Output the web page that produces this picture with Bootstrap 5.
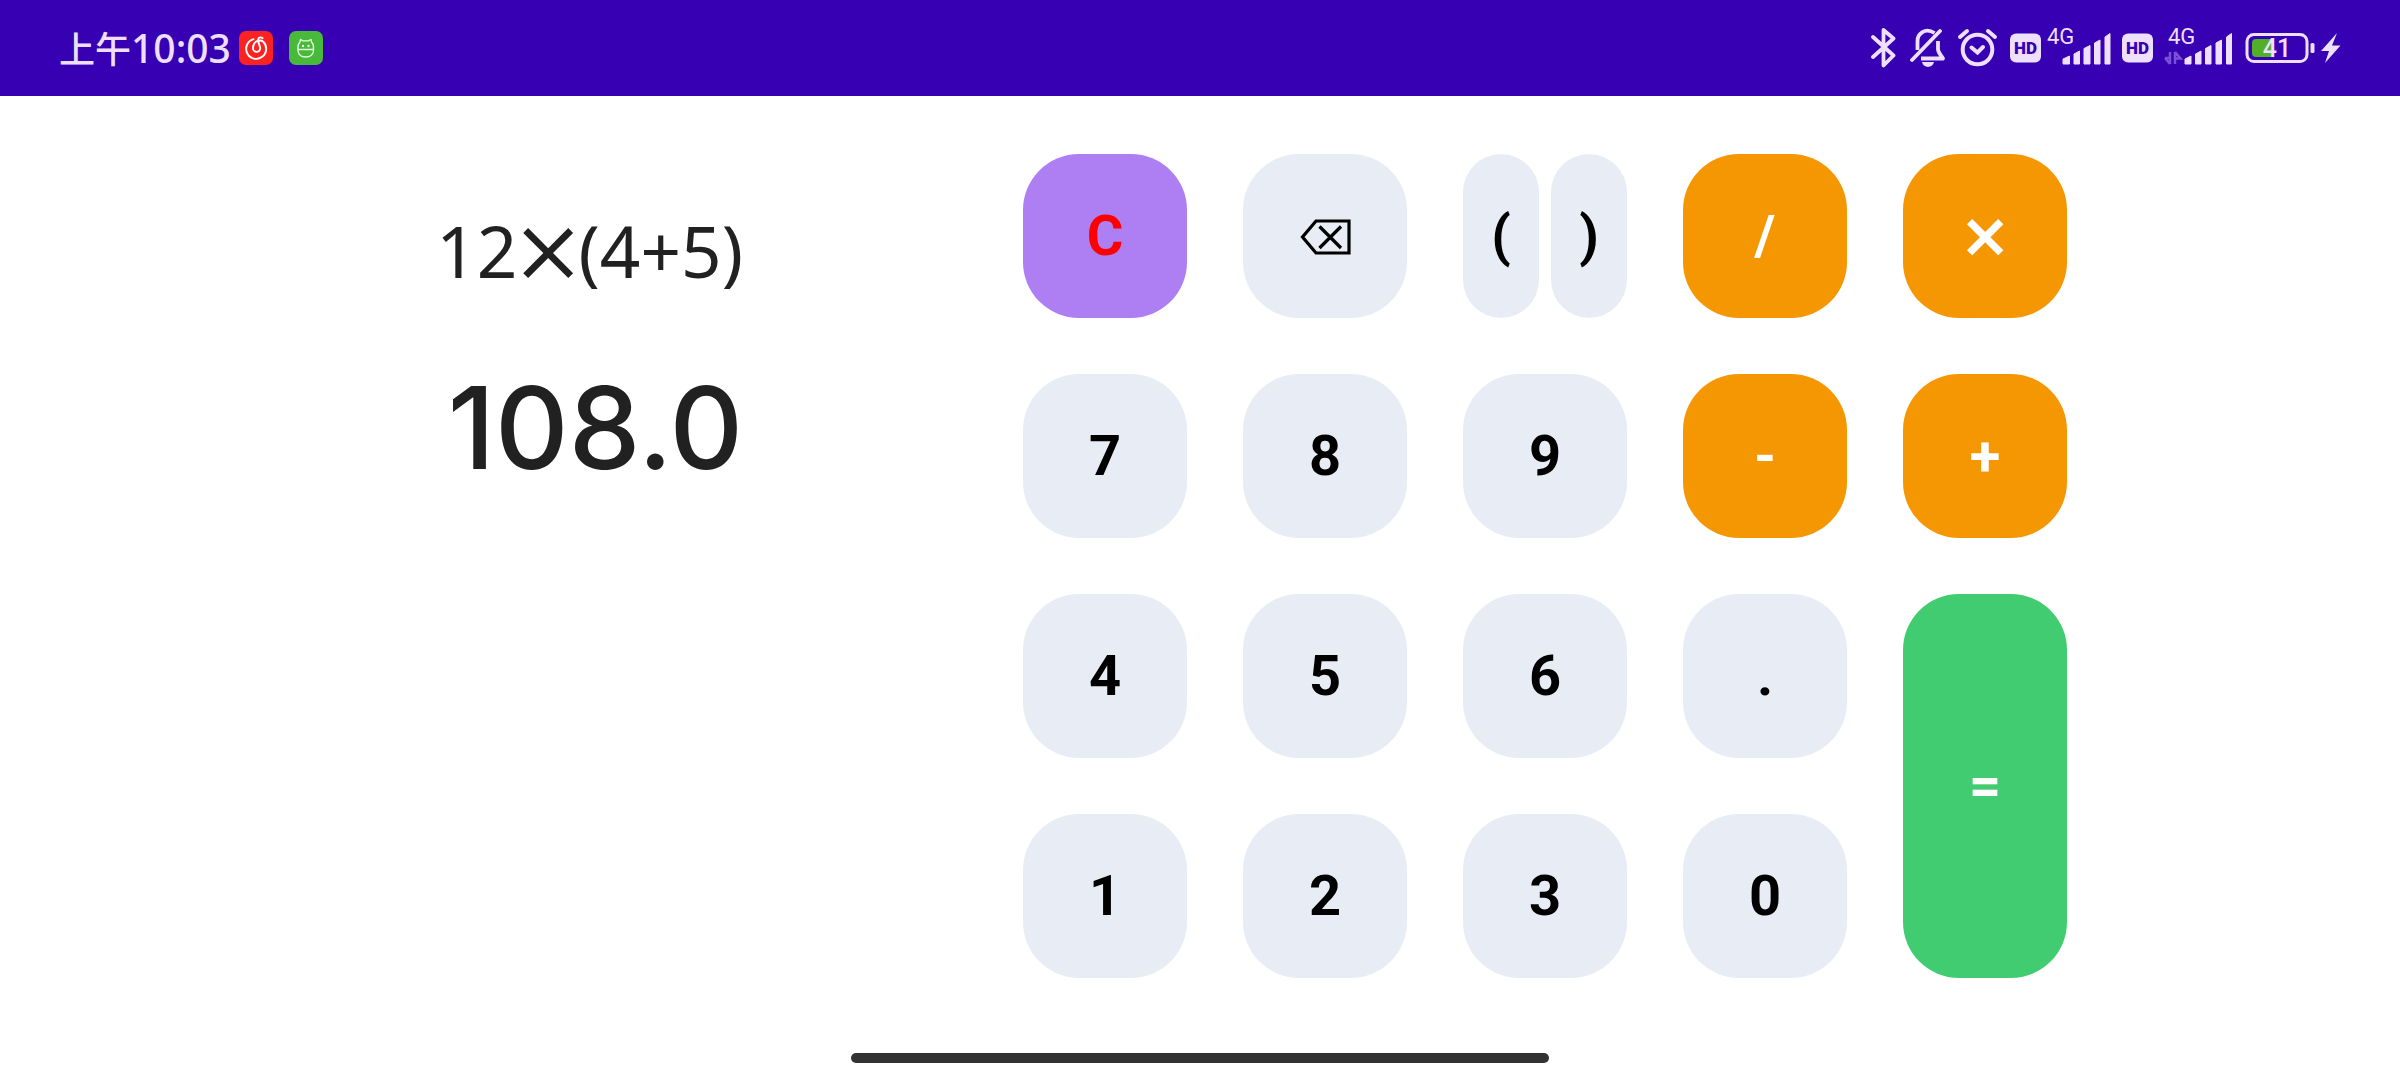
<!DOCTYPE html>
<html lang="zh-CN">
<head>
<meta charset="utf-8">
<meta name="viewport" content="width=device-width, initial-scale=1">
<title>Calculator</title>
<link href="https://cdn.jsdelivr.net/npm/bootstrap@5.3.0/dist/css/bootstrap.min.css" rel="stylesheet">
<style>
  body { font-family: Inter, "Noto Sans CJK SC", sans-serif; background: #fff; color: #212121; }
  .status-bar { height: 96px; padding: 0 59px; background: #3700b3; color: #eedfff; }
  .status-bar svg { display: block; flex: none; }
  .clock { font-size: 39px; line-height: 48px; padding-bottom: 2px; font-weight: 500; font-family: "Noto Sans", "Noto Sans CJK SC", sans-serif; }
  .clock-period { font-size: 36px; font-family: "Noto Sans CJK SC", sans-serif; }
  .status-icons { gap: 11px; }
  .calc { padding: 58px 24px 24px; gap: 280px; }
  .readout { width: 410px; padding-top: 48px; }
  .expression { font-family: "Noto Sans", sans-serif; font-size: 71px; line-height: 98px; }
  .times { font-family: Inter, sans-serif; font-size: 112px; line-height: 84px; font-weight: 300; margin: 0 -6px; }
  .result { font-size: 114px; line-height: 140px; font-weight: 500; margin-top: 58px; }
  .keypad { display: grid; grid-template-columns: repeat(5, minmax(0, 164px)); gap: 56px; }
  .key { --bs-btn-border-width: 0; --bs-btn-padding-x: 0; --bs-btn-padding-y: 0; --bs-btn-border-radius: 56px;
    --bs-btn-font-family: Roboto, sans-serif;
    --bs-btn-font-size: 56px; --bs-btn-font-weight: 700; --bs-btn-line-height: 1;
    --bs-btn-color: #000; --bs-btn-bg: #e8edf5; --bs-btn-hover-bg: #d9e0ec; --bs-btn-hover-color: #000;
    --bs-btn-active-bg: #ccd5e4; --bs-btn-active-color: #000; min-height: 164px; }
  .key-clear { --bs-btn-color: #f00; --bs-btn-bg: #ae7ff3; --bs-btn-hover-bg: #9d6aea; --bs-btn-hover-color: #f00; }
  .key-op { --bs-btn-color: #fff; --bs-btn-bg: #f59703; --bs-btn-hover-bg: #df8a00; --bs-btn-hover-color: #fff; }
  .key-times { --bs-btn-font-family: Inter, sans-serif; --bs-btn-font-size: 76px; --bs-btn-font-weight: 500; padding-bottom: 10px; }
  .key-equals { --bs-btn-color: #fff; --bs-btn-bg: #42cc71; --bs-btn-hover-bg: #35b862; --bs-btn-hover-color: #fff; grid-row: span 2; }
  .paren-pair { gap: 12px; }
  .home-bar { width: 698px; max-width: 60%; height: 10px; background: #333; margin-bottom: 17px; }
</style>
<script src="https://cdn.jsdelivr.net/npm/bootstrap@5.3.0/dist/js/bootstrap.bundle.min.js" defer></script>
</head>
<body class="min-vh-100 d-flex flex-column">

<header class="status-bar d-flex align-items-center justify-content-between">
  <div class="d-flex align-items-center">
    <div class="clock me-2"><span class="clock-period">上午</span>10:03</div>
    <svg class="me-3" width="34" height="34" viewBox="0 0 34 34" aria-hidden="true">
      <rect width="34" height="34" rx="7" fill="#fb2222"/>
      <path d="M14.500 8.200A10 10 0 1 0 24 10.500C21.500 8.500 14 9.500 14 17a3.600 3.600 0 0 0 7.200 0.500C21.200 14.500 18.500 11 19.200 8.200C19.800 5.800 22.500 6 23.500 7.200" fill="none" stroke="#fff" stroke-width="1.900" stroke-linecap="round"/>
    </svg>
    <svg width="34" height="34" viewBox="0 0 34 34" aria-hidden="true">
      <rect width="34" height="34" rx="7" fill="#48b93a"/>
      <path d="M9 17.500C8.500 13.500 10 12 11 11L11.500 8.500L14 9.800H19.500L22 8.500L22.500 11C23.500 12 25 13.500 24.500 17.500V20C24 23.500 21 26 16.700 26S9.500 23.500 9 20ZM8.500 18.500H25" fill="none" stroke="#e4ffe0" stroke-width="1.300" stroke-linejoin="round"/>
      <circle cx="14" cy="15" r="1.200" fill="#e4ffe0"/><circle cx="19.500" cy="15" r="1.200" fill="#e4ffe0"/>
    </svg>
  </div>

  <div class="status-icons d-flex align-items-center">
    <svg width="28" height="48" viewBox="0 0 28 48" fill="none" stroke="#eedfff" stroke-width="3.800" stroke-linejoin="round" stroke-linecap="round" role="img" aria-label="Bluetooth">
      <path d="M2 13L22.500 31.500L12.500 41.500V6L22.500 14.500L2 33"/>
    </svg>
    <svg width="36" height="48" viewBox="0 0 36 48" fill="none" stroke="#eedfff" stroke-width="3.800" stroke-linejoin="round" role="img" aria-label="Muted">
      <path d="M30 7L2 36" stroke-linecap="round"/>
      <path d="M24.500 9C15 3 7.500 10 7.500 17V26"/>
      <path d="M28 17V25C28 29 31 31 33 34.500H11"/>
      <path d="M12 38H24C22.500 44.500 13.500 44.500 12 38Z" fill="#eedfff" stroke="none"/>
    </svg>
    <svg width="41" height="48" viewBox="0 0 41 48" fill="none" stroke="#eedfff" stroke-width="4" stroke-linecap="round" role="img" aria-label="Alarm">
      <circle cx="20.500" cy="25.500" r="14.800"/>
      <path d="M3 13L10 7M31 7L38 13M14.500 23.500L20.500 28.500L26 23"/>
    </svg>
    <svg width="102" height="48" viewBox="0 0 102 48" fill="#eedfff" role="img" aria-label="HD 4G">
      <rect x="1" y="9.500" width="31" height="29" rx="6"/>
      <text x="16.500" y="30" text-anchor="middle" font-family="Roboto, sans-serif" font-size="17" font-weight="900" fill="#3700b3">HD</text>
      <text x="38" y="20" font-family="Roboto, sans-serif" font-size="22">4G</text>
      <path d="M54 40V35L60.500 32V40ZM65 40V30L70.500 27V40ZM75 40V24.500L81 21.500V40ZM85.500 40V19L91 16V40ZM96 40V13L101 9.500V40Z" stroke="#eedfff" stroke-linejoin="round"/>
    </svg>
    <svg width="112" height="48" viewBox="0 0 112 48" fill="#eedfff" role="img" aria-label="HD 4G">
      <rect x="0" y="9.500" width="31" height="29" rx="6"/>
      <text x="15.500" y="30" text-anchor="middle" font-family="Roboto, sans-serif" font-size="17" font-weight="900" fill="#3700b3">HD</text>
      <text x="46" y="20" font-family="Roboto, sans-serif" font-size="22">4G</text>
      <path d="M43 34L48 40M48 40V28M53 28V40M53 28L58.500 34.500H53M43 34H48" fill="none" stroke="#7a50d4" stroke-width="2.500"/>
      <path d="M63 40V35L69 32V40ZM73.500 40V30L79 27V40ZM83.500 40V24.500L89 21.500V40ZM94 40V19L99.500 16V40ZM104.500 40V13L109.500 9.500V40Z" stroke="#eedfff" stroke-linejoin="round"/>
    </svg>
    <svg width="96" height="48" viewBox="0 0 96 48" role="img" aria-label="Battery 41 percent, charging">
      <rect x="2" y="10.500" width="60" height="27" rx="7" fill="none" stroke="#eedfff" stroke-width="3"/>
      <path d="M11 15H27V33H11A4 4 0 0 1 7 29V19A4 4 0 0 1 11 15Z" fill="#52b028"/>
      <rect x="65.500" y="19" width="4" height="10" rx="1.500" fill="#eedfff"/>
      <text x="32" y="33" text-anchor="middle" font-family="Roboto, sans-serif" font-size="25" font-weight="500" fill="#eedfff">41</text>
      <path d="M92 9L76 27H84L80 39L95.500 21.500H87Z" fill="#eedfff"/>
    </svg>
  </div>
</header>

<main class="calc flex-grow-1 d-flex justify-content-center align-items-start">
  <section class="readout text-end" aria-live="polite">
    <div class="expression d-flex justify-content-end align-items-start"><span>12</span><span class="times">×</span><span>(4+5)</span></div>
    <div class="result">108.0</div>
  </section>

  <section class="keypad" aria-label="Keypad">
    <button type="button" class="btn key key-clear">C</button>
    <button type="button" class="btn key d-flex align-items-center justify-content-center" aria-label="Backspace">
      <svg width="52" height="38" viewBox="0 0 52 38" fill="none" stroke="#000" aria-hidden="true">
        <path d="M17 4H50V36H17L3.500 20Z" stroke-width="3.200"/>
        <path d="M20.500 9.500L42 31M42 9.500L20.500 31" stroke-width="3.200"/>
      </svg>
    </button>
    <div class="paren-pair d-flex">
      <button type="button" class="btn key flex-fill">(</button>
      <button type="button" class="btn key flex-fill">)</button>
    </div>
    <button type="button" class="btn key key-op">/</button>
    <button type="button" class="btn key key-op key-times">×</button>

    <button type="button" class="btn key">7</button>
    <button type="button" class="btn key">8</button>
    <button type="button" class="btn key">9</button>
    <button type="button" class="btn key key-op">-</button>
    <button type="button" class="btn key key-op">+</button>

    <button type="button" class="btn key">4</button>
    <button type="button" class="btn key">5</button>
    <button type="button" class="btn key">6</button>
    <button type="button" class="btn key">.</button>
    <button type="button" class="btn key key-equals">=</button>

    <button type="button" class="btn key">1</button>
    <button type="button" class="btn key">2</button>
    <button type="button" class="btn key">3</button>
    <button type="button" class="btn key">0</button>
  </section>
</main>

<div class="home-bar rounded-pill mx-auto"></div>

</body>
</html>
